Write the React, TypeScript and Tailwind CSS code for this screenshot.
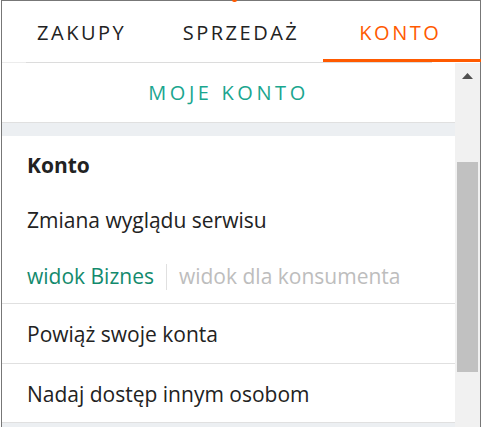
const tabs = ['ZAKUPY', 'SPRZEDAŻ', 'KONTO'];

const Scrollbar = () => (
    <div className="w-[25px] shrink-0 bg-[#f1f1f1] relative">
        <div className="flex justify-center pt-[10px]">
            <svg width="11" height="6" viewBox="0 0 11 6">
                <polygon points="5.5,0 11,6 0,6" fill="#505050" />
            </svg>
        </div>
        <div className="absolute left-[2px] top-[99px] w-[21px] h-[210px] bg-[#c1c1c1]" />
    </div>
);

export default function App() {
    return (
        <div
            className="w-[483px] h-[427px] bg-white overflow-hidden relative"
            style={{ fontFamily: '"Open Sans", "Noto Sans", sans-serif' }}
        >
            <div className="absolute left-[232px] top-0 w-[5px] h-[2px] rounded-b-full bg-[#ff5a00]" />
            <div className="ml-[1px] w-[480px] h-[427px] border-t border-l border-r border-[#777] flex flex-col">
                <div className="flex h-[61px] shrink-0">
                    {tabs.map((t, i) => (
                        <div
                            key={t}
                            className={`flex-1 flex items-center justify-center relative text-[20px] tracking-[2.5px] ${i === 2 ? 'text-[#ff5a00]' : 'text-[#222]'}`}
                        >
                            <span className="pt-[2px]">{t}</span>
                            {i === 2 && <div className="absolute left-[2px] right-[-1px] bottom-0 h-[3px] bg-[#ff5a00]" />}
                        </div>
                    ))}
                </div>
                <div className="flex h-[1px] shrink-0">
                    <div className="w-[24px] bg-[#ececec]" />
                    <div className="w-[406px] bg-[#dcdcdc]" />
                    <div className="flex-1 bg-white" />
                </div>
                <div className="flex flex-1 min-h-0">
                    <div className="flex-1 flex flex-col overflow-hidden">
                        <div className="h-[60px] shrink-0 flex items-center justify-center border-b border-[#e0e0e0] text-[20px] tracking-[3.6px] text-[#1aa68f]">
                            MOJE KONTO
                        </div>
                        <div className="h-[13px] shrink-0 bg-[#eceff2]" />
                        <div className="flex flex-col px-[25px] text-[21px] text-[#222]">
                            <div className="h-[56px] pt-[3px] flex items-center font-bold">Konto</div>
                            <div className="h-[55px] pt-[2px] flex items-center">Zmiana wyglądu serwisu</div>
                            <div className="h-[56px] pt-[3px] flex items-center">
                                <span className="text-[#138a6d]">widok Biznes</span>
                                <span className="mx-[12px] w-px h-[26px] bg-[#e0e0e0]" />
                                <span className="text-[#bdbdbd]">widok dla konsumenta</span>
                            </div>
                        </div>
                        <div className="border-t border-[#e0e0e0] h-[60px] pt-[3px] shrink-0 flex items-center px-[25px] text-[21px] text-[#222]">
                            Powiąż swoje konta
                        </div>
                        <div className="border-t border-[#e0e0e0] h-[59px] pt-[3px] shrink-0 flex items-center px-[25px] text-[21px] text-[#222]">
                            Nadaj dostęp innym osobom
                        </div>
                        <div className="border-t border-[#e0e0e0] flex-1 bg-[#eceff2]" />
                    </div>
                    <Scrollbar />
                </div>
            </div>
        </div>
    );
}
